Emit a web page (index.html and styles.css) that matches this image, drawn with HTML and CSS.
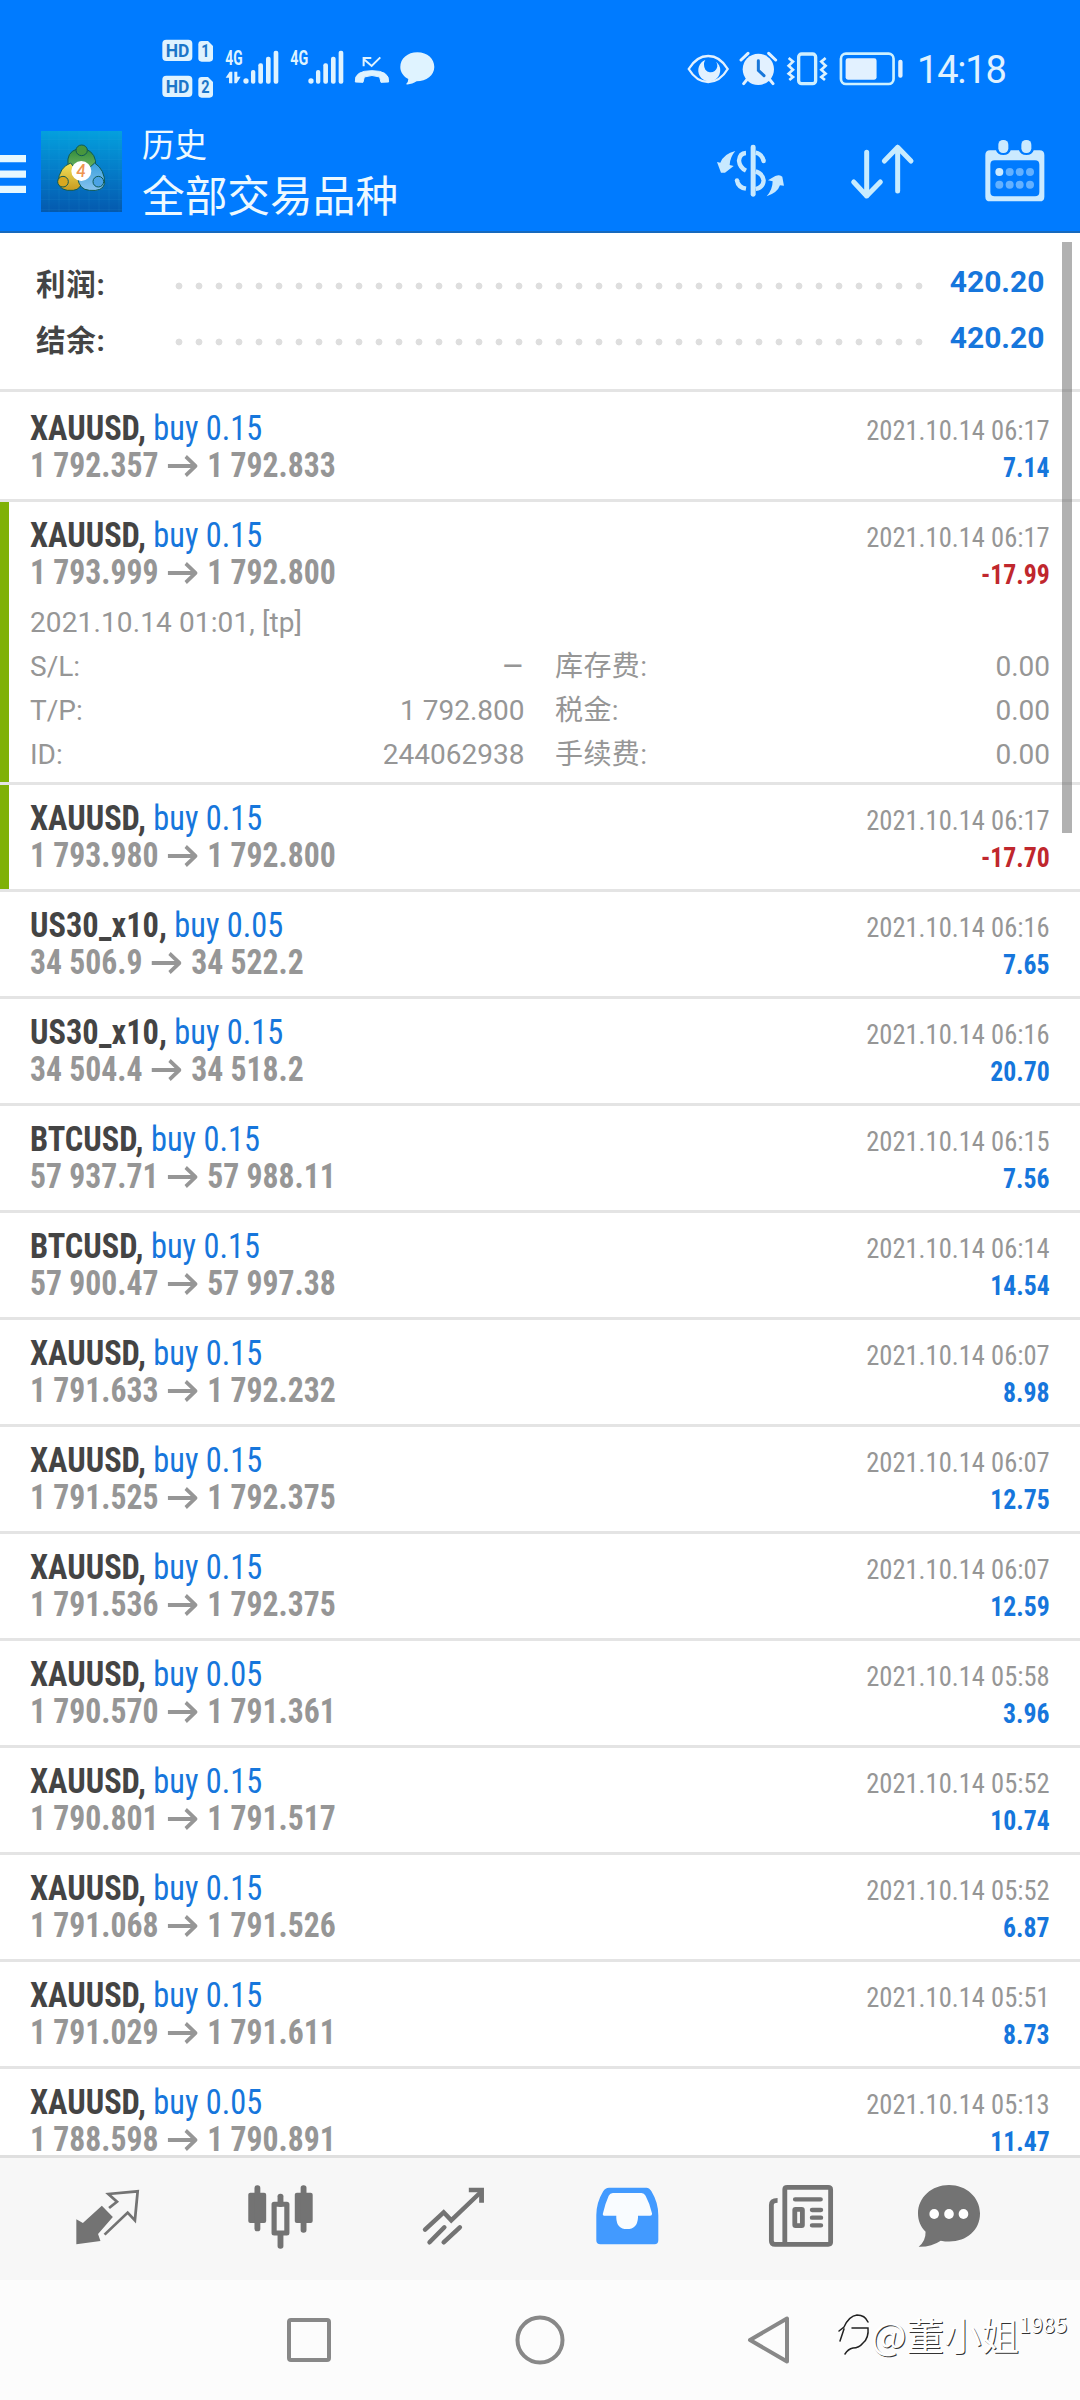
FILE: index.html
```html
<!DOCTYPE html>
<html lang="zh-CN">
<head>
<meta charset="utf-8">
<title>历史</title>
<link rel="stylesheet" href="styles.css">
</head>
<body>
<div class="screen">
  <header class="top">
    <div class="status">
      <svg class="status-left" viewBox="50 40 850 210" fill="#dff3ff">
        <rect x="66" y="60" width="90" height="64" rx="12"/>
        <path d="M184 64H203L218 79V116Q218 126 208 126H184Q174 126 174 116V74Q174 64 184 64Z"/>
        <rect x="66" y="168" width="90" height="64" rx="12"/>
        <path d="M184 172H203L218 187V224Q218 234 208 234H184Q174 234 174 224V182Q174 172 184 172Z"/>
        <g class="badge" fill="#1c76c8">
          <text x="76" y="111" textLength="71" lengthAdjust="spacingAndGlyphs">HD</text>
          <text x="76" y="219" textLength="71" lengthAdjust="spacingAndGlyphs">HD</text>
          <text x="183" y="113" textLength="25" lengthAdjust="spacingAndGlyphs">1</text>
          <text x="183" y="221" textLength="25" lengthAdjust="spacingAndGlyphs">2</text>
        </g>
        <g class="net">
          <text x="255" y="137" textLength="52" lengthAdjust="spacingAndGlyphs">4G</text>
          <text x="450" y="137" textLength="54" lengthAdjust="spacingAndGlyphs">4G</text>
        </g>
        <path d="M256 174L268 156H276V191H266V174ZM282 156H291V171H301L289 191H282Z"/>
        <g id="bars"><circle cx="317" cy="184" r="8"/><rect x="332" y="151" width="13" height="41" rx="6"/><rect x="354" y="131" width="14" height="61" rx="6"/><rect x="377" y="111" width="14" height="81" rx="6"/><rect x="400" y="93" width="14" height="99" rx="6"/></g>
        <use href="#bars" x="195"/>
        <path d="M645 187Q641 153 695 153Q748 153 745 187L722 188L718 172Q695 163 672 172L668 188Z" stroke="#dff3ff" stroke-width="3" stroke-linejoin="round"/>
        <path d="M670 140V115H693M670 118L694 139L720 113" fill="none" stroke="#dff3ff" stroke-width="6"/>
        <path d="M831 98C862 98 882 118 882 142C882 168 858 184 829 185C819 192 809 195 797 194Q804 189 804 178C790 171 780 158 780 142C780 117 802 98 831 98Z"/>
      </svg>
      <div class="status-right">
        <svg class="status-icons" viewBox="70 80 670 130" fill="#e2f1ff">
          <path d="M84 146C115 94 170 94 201 146C170 198 115 198 84 146Z" fill="none" stroke="#e2f1ff" stroke-width="7"/>
          <path d="M134 119A33 33 0 1 0 166 124A18 18 0 1 1 134 148Q125 130 134 119Z"/>
          <circle cx="293" cy="147" r="47"/>
          <path d="M241 119L262 99M324 99L345 119M262 174L249 190M324 174L337 190" stroke="#e2f1ff" stroke-width="9" stroke-linecap="round"/>
          <path d="M293 121V150L310 166" fill="none" stroke="#1877d9" stroke-width="9" stroke-linecap="round"/>
          <rect x="414" y="101" width="51" height="89" rx="9" fill="none" stroke="#cfefff" stroke-width="10"/>
          <path d="M384 113L397 124L384 136L397 148L384 160L397 170L386 179M495 113L482 124L495 136L482 148L495 160L482 170L493 179" fill="none" stroke="#dcf2ff" stroke-width="8"/>
          <rect x="541" y="100" width="158" height="91" rx="15" fill="none" stroke="#cdf1ff" stroke-width="8"/>
          <rect x="555" y="114" width="93" height="64" rx="7"/>
          <rect x="713" y="118" width="13" height="54" rx="6"/>
        </svg>
        <span class="clock">14:18</span>
      </div>
    </div>
    <div class="appbar">
      <svg class="menu" viewBox="0 0 26 38" fill="#e6f8ff"><path d="M0 0H26V7.3H0ZM0 15.5H26V22.8H0ZM0 30.7H26V38H0Z"/></svg>
      <svg class="logo" viewBox="123 64 243 243">
        <defs>
          <linearGradient id="bg" x1="0" y1="0" x2="0" y2="1"><stop offset="0" stop-color="#04a0dd"/><stop offset=".5" stop-color="#047bc8"/><stop offset="1" stop-color="#0459ae"/></linearGradient>
          <linearGradient id="gr" x1="0" y1="0" x2="0" y2="1"><stop offset="0" stop-color="#2f8a3c"/><stop offset="1" stop-color="#8cc870"/></linearGradient>
          <linearGradient id="ye" x1="0" y1="0" x2="0" y2="1"><stop offset="0" stop-color="#f3e35a"/><stop offset="1" stop-color="#c69a20"/></linearGradient>
          <linearGradient id="bl" x1="0" y1="0" x2="0" y2="1"><stop offset="0" stop-color="#3aa0dc"/><stop offset="1" stop-color="#86c2ee"/></linearGradient>
        </defs>
        <rect x="123" y="64" width="243" height="243" fill="url(#bg)"/>
        <path d="M147 64V307M177 64V307M207 64V307M237 64V307M267 64V307M297 64V307M327 64V307M357 64V307M123 90H366M123 120H366M123 150H366M123 180H366M123 210H366M123 240H366M123 270H366M123 300H366" stroke="#39b8ee" stroke-opacity=".15" stroke-width="2"/>
        <g stroke="#0f5a55" stroke-width="3">
          <path d="M204 165Q199 128 231 118H258Q290 132 287 170Q280 205 246 203Q210 200 204 165Z" fill="url(#gr)"/>
          <path d="M212 160Q178 172 174 218Q180 246 220 242Q245 240 248 205Z" fill="url(#ye)"/>
          <path d="M284 160Q315 180 314 222Q308 246 268 242Q238 240 233 205Z" fill="url(#bl)"/>
          <ellipse cx="245" cy="122" rx="17" ry="16" fill="#48963d"/>
          <circle cx="189" cy="216" r="16" fill="#d9a820"/>
          <circle cx="295" cy="216" r="16" fill="#4ba3e5"/>
        </g>
        <circle cx="244" cy="184" r="30" fill="#fff"/>
        <text class="four" x="243" y="202" text-anchor="middle" fill="#ee9550">4</text>
      </svg>
      <div class="heading"><div class="sub">历史</div><div class="title">全部交易品种</div></div>
      <div class="actions">
        <svg class="act-money" viewBox="100 80 220 200" fill="#c8e9ff">
          <path d="M109 155L119 157Q130 130 164 122Q148 140 147 164L159 167L133 187H121Z"/>
          <path d="M258 258Q276 238 276 213L262 210L284 197Q298 191 305 199L310 226L298 225Q291 247 258 258Z"/>
          <rect x="210" y="103" width="15" height="156" rx="7"/>
          <path d="M196 128Q177 129 175 151Q177 171 196 181M169 210Q172 231 196 235M225 127Q244 131 249 152M225 183Q246 190 249 210Q248 231 225 236" fill="none" stroke="#c8e9ff" stroke-width="13"/>
          <circle cx="249" cy="152" r="6.500"/><circle cx="169" cy="210" r="6.500"/>
        </svg>
        <svg class="act-sort" viewBox="500 90 212 190" fill="none" stroke="#c8ecff" stroke-width="15" stroke-linecap="round" stroke-linejoin="round"><path d="M559 127V258M520 216L559 258L600 216M652 243V112M612 153L652 112L692 153"/></svg>
        <svg class="act-cal" viewBox="905 80 197 200" fill="#cbeaff">
          <path fill-rule="evenodd" d="M929 120H947Q951 134 969 134Q987 134 991 120H1016Q1020 134 1038 134Q1056 134 1060 120H1078Q1092 120 1092 134V259Q1092 273 1078 273H929Q915 273 915 259V134Q915 120 929 120ZM943 150Q930 150 930 163V245Q930 258 943 258H1064Q1077 258 1077 245V163Q1077 150 1064 150Z"/>
          <rect x="954" y="89" width="30" height="39" rx="14"/><rect x="1023" y="89" width="30" height="39" rx="14"/>
          <circle cx="957" cy="185" r="12"/>
          <g fill="#64b1ff"><circle cx="988" cy="185" r="12"/><circle cx="1018" cy="185" r="12"/><circle cx="1049" cy="185" r="12"/><circle cx="957" cy="223" r="12"/><circle cx="988" cy="223" r="12"/><circle cx="1018" cy="223" r="12"/><circle cx="1049" cy="223" r="12"/></g>
        </svg>
      </div>
    </div>
  </header>

  <main class="list">
    <section class="summary">
      <div class="sum-row"><span class="sum-label">利润:</span><span class="dots"></span><span class="sum-value">420.20</span></div>
      <div class="sum-row"><span class="sum-label">结余:</span><span class="dots"></span><span class="sum-value">420.20</span></div>
    </section>

    <article class="deal"><div class="line"><div class="name"><b>XAUUSD,</b> buy 0.15</div><time>2021.10.14 06:17</time></div><div class="line"><div class="price"><span>1 792.357</span><svg class="arrow"><use href="#arr"/></svg><span>1 792.833</span></div><div class="profit">7.14</div></div></article>
    <article class="deal marked open"><div class="line"><div class="name"><b>XAUUSD,</b> buy 0.15</div><time>2021.10.14 06:17</time></div><div class="line"><div class="price"><span>1 793.999</span><svg class="arrow"><use href="#arr"/></svg><span>1 792.800</span></div><div class="profit loss">-17.99</div></div>
      <div class="opened">2021.10.14 01:01, [tp]</div>
      <div class="details">
        <span>S/L:</span><span class="dash">–</span><span>库存费:</span><span>0.00</span>
        <span>T/P:</span><span>1 792.800</span><span>税金:</span><span>0.00</span>
        <span>ID:</span><span>244062938</span><span>手续费:</span><span>0.00</span>
      </div>
    </article>
    <article class="deal marked"><div class="line"><div class="name"><b>XAUUSD,</b> buy 0.15</div><time>2021.10.14 06:17</time></div><div class="line"><div class="price"><span>1 793.980</span><svg class="arrow"><use href="#arr"/></svg><span>1 792.800</span></div><div class="profit loss">-17.70</div></div></article>
    <article class="deal"><div class="line"><div class="name"><b>US30_x10,</b> buy 0.05</div><time>2021.10.14 06:16</time></div><div class="line"><div class="price"><span>34 506.9</span><svg class="arrow"><use href="#arr"/></svg><span>34 522.2</span></div><div class="profit">7.65</div></div></article>
    <article class="deal"><div class="line"><div class="name"><b>US30_x10,</b> buy 0.15</div><time>2021.10.14 06:16</time></div><div class="line"><div class="price"><span>34 504.4</span><svg class="arrow"><use href="#arr"/></svg><span>34 518.2</span></div><div class="profit">20.70</div></div></article>
    <article class="deal"><div class="line"><div class="name"><b>BTCUSD,</b> buy 0.15</div><time>2021.10.14 06:15</time></div><div class="line"><div class="price"><span>57 937.71</span><svg class="arrow"><use href="#arr"/></svg><span>57 988.11</span></div><div class="profit">7.56</div></div></article>
    <article class="deal"><div class="line"><div class="name"><b>BTCUSD,</b> buy 0.15</div><time>2021.10.14 06:14</time></div><div class="line"><div class="price"><span>57 900.47</span><svg class="arrow"><use href="#arr"/></svg><span>57 997.38</span></div><div class="profit">14.54</div></div></article>
    <article class="deal"><div class="line"><div class="name"><b>XAUUSD,</b> buy 0.15</div><time>2021.10.14 06:07</time></div><div class="line"><div class="price"><span>1 791.633</span><svg class="arrow"><use href="#arr"/></svg><span>1 792.232</span></div><div class="profit">8.98</div></div></article>
    <article class="deal"><div class="line"><div class="name"><b>XAUUSD,</b> buy 0.15</div><time>2021.10.14 06:07</time></div><div class="line"><div class="price"><span>1 791.525</span><svg class="arrow"><use href="#arr"/></svg><span>1 792.375</span></div><div class="profit">12.75</div></div></article>
    <article class="deal"><div class="line"><div class="name"><b>XAUUSD,</b> buy 0.15</div><time>2021.10.14 06:07</time></div><div class="line"><div class="price"><span>1 791.536</span><svg class="arrow"><use href="#arr"/></svg><span>1 792.375</span></div><div class="profit">12.59</div></div></article>
    <article class="deal"><div class="line"><div class="name"><b>XAUUSD,</b> buy 0.05</div><time>2021.10.14 05:58</time></div><div class="line"><div class="price"><span>1 790.570</span><svg class="arrow"><use href="#arr"/></svg><span>1 791.361</span></div><div class="profit">3.96</div></div></article>
    <article class="deal"><div class="line"><div class="name"><b>XAUUSD,</b> buy 0.15</div><time>2021.10.14 05:52</time></div><div class="line"><div class="price"><span>1 790.801</span><svg class="arrow"><use href="#arr"/></svg><span>1 791.517</span></div><div class="profit">10.74</div></div></article>
    <article class="deal"><div class="line"><div class="name"><b>XAUUSD,</b> buy 0.15</div><time>2021.10.14 05:52</time></div><div class="line"><div class="price"><span>1 791.068</span><svg class="arrow"><use href="#arr"/></svg><span>1 791.526</span></div><div class="profit">6.87</div></div></article>
    <article class="deal"><div class="line"><div class="name"><b>XAUUSD,</b> buy 0.15</div><time>2021.10.14 05:51</time></div><div class="line"><div class="price"><span>1 791.029</span><svg class="arrow"><use href="#arr"/></svg><span>1 791.611</span></div><div class="profit">8.73</div></div></article>
    <article class="deal"><div class="line"><div class="name"><b>XAUUSD,</b> buy 0.05</div><time>2021.10.14 05:13</time></div><div class="line"><div class="price"><span>1 788.598</span><svg class="arrow"><use href="#arr"/></svg><span>1 790.891</span></div><div class="profit">11.47</div></div></article>
    <div class="scrollbar"></div>
  </main>

  <nav class="tabs">
    <svg viewBox="207.500 369 209 216" preserveAspectRatio="none" fill="#737373">
      <path d="M297 437L329 471L286 522L293 543L223 553V478L242 489Z"/>
      <path d="M318 444L341 425L316 402L401 394L393 481L372 458L305 524" fill="none" stroke="#737373" stroke-width="8"/>
    </svg>
    <svg viewBox="710.500 369 209 216" preserveAspectRatio="none" fill="#737373">
      <rect x="720" y="398" width="52" height="91" rx="6"/><rect x="738" y="376" width="17" height="138" rx="8"/>
      <rect x="855" y="398" width="52" height="91" rx="6"/><rect x="872" y="376" width="17" height="142" rx="8"/>
      <rect x="805" y="401" width="17" height="40" rx="8"/><rect x="805" y="516" width="17" height="50" rx="8"/>
      <rect x="795" y="433" width="37" height="86" fill="none" stroke="#737373" stroke-width="15" stroke-linejoin="round"/>
    </svg>
    <svg viewBox="1213.500 369 209 216" preserveAspectRatio="none" fill="none" stroke="#737373" stroke-width="13">
      <path d="M1234 509L1288 457L1310 481L1393 399M1247 547L1290 502M1288 547L1335 502" stroke-linecap="round"/><path d="M1361 390H1398V428" stroke-width="14"/>
    </svg>
    <svg viewBox="150.500 369 209 216" preserveAspectRatio="none">
      <path fill="#429aff" d="M200 383H308Q318 384 323 394Q343 428 343 466V541Q343 553 332 553H175Q163 553 163 541V466Q163 428 183 394Q189 383 200 383Z"/>
      <path fill="#f9fcff" d="M211 399H294Q302 399 306 407Q319 432 325 461Q325 467 319 467H284V473Q282 507 252 507Q222 507 221 473V467H188Q181 467 182 461Q188 432 199 407Q203 399 211 399Z"/>
    </svg>
    <svg viewBox="654.500 369 209 216" preserveAspectRatio="none" fill="none" stroke="#737373" stroke-width="14">
      <path d="M712 388Q712 382 719 382H838Q845 382 845 389V546Q845 553 838 553H684Q673 553 673 542V435Q673 421 691 421M712 386V551"/>
      <path d="M742 418H816M791 450H817M791 473H817M791 496H817" stroke-linecap="round" stroke-width="13"/><rect x="741" y="448" width="22" height="49" rx="2"/>
    </svg>
    <svg viewBox="1083.500 369 209 216" preserveAspectRatio="none">
      <path fill="#737373" d="M1188 375C1238 375 1278 412 1278 460C1278 520 1225 555 1164 542Q1137 561 1100 560Q1121 542 1120 515C1105 500 1098 482 1098 460C1098 412 1138 375 1188 375Z"/>
      <g fill="#fff"><ellipse cx="1145" cy="462" rx="14" ry="15"/><ellipse cx="1188" cy="462" rx="14" ry="15"/><ellipse cx="1230" cy="462" rx="14" ry="15"/></g>
    </svg>
  </nav>

  <footer class="sysnav">
    <svg viewBox="0 0 60 60"><rect x="10" y="10" width="40" height="40" rx="2"/></svg>
    <svg viewBox="0 0 60 60"><circle cx="31" cy="30" r="22.500"/></svg>
    <svg viewBox="0 0 60 60"><path d="M11 30L48 8.500V51.500Z"/></svg>
    <div class="mark">
      <svg viewBox="0 0 34 48" fill="none" stroke="#222" stroke-width="1.500" stroke-linecap="round"><path d="M2 20L7 16Q12 5 20 4Q28 4 31 11M7 18L3 30M15 17H31Q32 27 26 32Q22 37 16 37Q11 38 8 43"/></svg>
      <span>@董小姐</span><sup>1985</sup>
    </div>
  </footer>
</div>
<svg class="defs"><symbol id="arr" viewBox="0 0 33 22" preserveAspectRatio="none"><path d="M0 11H30M20 1.500L31 11L20 20.500" fill="none" stroke="#969696" stroke-width="4"/></symbol></svg>
</body>
</html>
```
FILE: styles.css
```css
body { margin: 0; background: #fff; font-family: Roboto, "Noto Sans CJK SC", sans-serif; }
svg { display: block; flex: none; }
.defs { position: absolute; width: 0; height: 0; }
.screen { width: 1080px; height: 2400px; display: flex; flex-direction: column; overflow: hidden; }

.top { height: 231px; flex: none; background: #007bff; border-bottom: 2px solid #1769bd; }
.status { height: 110px; display: flex; justify-content: space-between; box-sizing: border-box; padding: 33px 74px 0 157px; }
.status-left { width: 283.300px; height: 70px; }
.badge text { font-weight: 700; font-size: 56px; }
.net text { font-weight: 700; font-size: 60px; }
.status-right { display: flex; }
.status-icons { width: 223.300px; height: 43.300px; margin-top: 13.700px; }
.clock { width: 89px; margin-left: 10px; margin-top: 14px; color: #e0f2ff; font-size: 38px; line-height: 46px; white-space: nowrap; letter-spacing: -1.200px; }
.appbar { height: 121px; display: flex; }
.menu { width: 26px; height: 38px; margin-top: 44.500px; }
.logo { width: 81px; height: 81px; margin: 21.300px 0 0 15px; }
.four { font: italic 700 50px Lato, sans-serif; }
.heading { color: #eef9ff; margin: 12.500px 0 0 20px; width: 500px; }
.sub { font-size: 32.500px; line-height: 46px; }
.title { font-size: 42.700px; line-height: 56px; }
.actions { display: flex; }
.act-money { width: 73.300px; height: 66.700px; margin: 26.700px 0 0 71.700px; }
.act-sort { width: 70.700px; height: 63.300px; margin: 30px 0 0 60px; }
.act-cal { width: 65.700px; height: 66.700px; margin: 26.700px 0 0 64.500px; }

.list { position: relative; flex: none; height: 1922px; overflow: hidden; }
.summary { height: 159px; box-sizing: border-box; border-bottom: 3px solid #e4e4e4; padding-top: 22px; margin-bottom: 3px; }
.sum-row { display: flex; height: 56px; align-items: center; padding: 0 35.500px 0 36px; }
.sum-label { width: 133px; margin-top: -3px; font-size: 29.500px; font-weight: 700; color: #444; letter-spacing: .8px; white-space: nowrap; }
.dots { flex: none; width: 760px; height: 20px; margin-top: 5px; background: radial-gradient(circle, #dedede 3px, transparent 3.800px) 0 0 / 20px 20px; }
.sum-value { margin: -3px 0 0 auto; font-size: 30px; font-weight: 700; color: #1676dc; }

.deal { height: 107px; box-sizing: border-box; border-bottom: 3px solid #e4e4e4; padding: 15px 30px 0 30px; }
.marked { background: linear-gradient(#7fb106, #7fb106) left / 9px 100% no-repeat; background-clip: padding-box; }
.open { height: 283px; }
.line { height: 37px; display: flex; justify-content: space-between; align-items: baseline; line-height: 37px; white-space: nowrap; }
.name, .price, time, .profit { font-family: "Roboto Condensed", Roboto, sans-serif; font-stretch: 75%; }
.name, .price { transform-origin: left; }
time, .profit { transform-origin: right; }
.name { font-size: 35.200px; color: #1676dc; transform: scaleX(.92); }
.name b { color: #444; }
.price { display: flex; align-items: baseline; font-size: 35.200px; font-weight: 700; color: #969696; transform: scaleX(.9); }
.arrow { width: 33px; height: 22px; margin: 0 11px 0 10px; }
time { font-size: 28px; color: #969696; transform: scaleX(.947); }
.profit { font-size: 28px; font-weight: 700; color: #1676dc; transform: scaleX(.92); }
.loss { color: #c0272d; }
.opened { margin-top: 9px; height: 45px; line-height: 45px; font-size: 28px; color: #969696; letter-spacing: .12px; }
.details { display: grid; grid-template-columns: 140px 354.500px 170px 1fr; grid-auto-rows: 44px; line-height: 44px; font-size: 28px; color: #969696; }
.details span:nth-child(even) { text-align: right; }
.details span:nth-child(4n+3) { padding-left: 30.500px; letter-spacing: .4px; }
.dash { font-size: 35px; }
.scrollbar { position: absolute; top: 9px; left: 1062px; width: 10px; height: 591px; background: rgba(100,100,100,.5); }

.tabs { height: 122px; flex: none; border-top: 3px solid #dfdfdf; background: #f7f7f7; display: grid; grid-template-columns: repeat(5, 173.400px) 122px; padding-left: 20.700px; justify-items: center; align-items: center; }
.tabs svg { width: 72px; height: 72px; }
.sysnav { position: relative; height: 120px; flex: none; background: #fcfcfc; display: flex; align-items: center; gap: 170px; padding-left: 279px; }
.sysnav > svg { width: 60px; height: 60px; fill: none; stroke: #888; stroke-width: 4; stroke-linejoin: round; }
.mark { position: absolute; left: 837px; top: 27px; display: flex; color: #fff; font: 37.500px/54px "Noto Sans CJK SC", sans-serif; text-shadow: 1px 1px .5px #333; white-space: nowrap; }
.mark svg { width: 34px; height: 48px; margin-top: 4px; }
.mark sup { font-size: 21px; line-height: 30px; margin-top: 2px; letter-spacing: .5px; }
```
